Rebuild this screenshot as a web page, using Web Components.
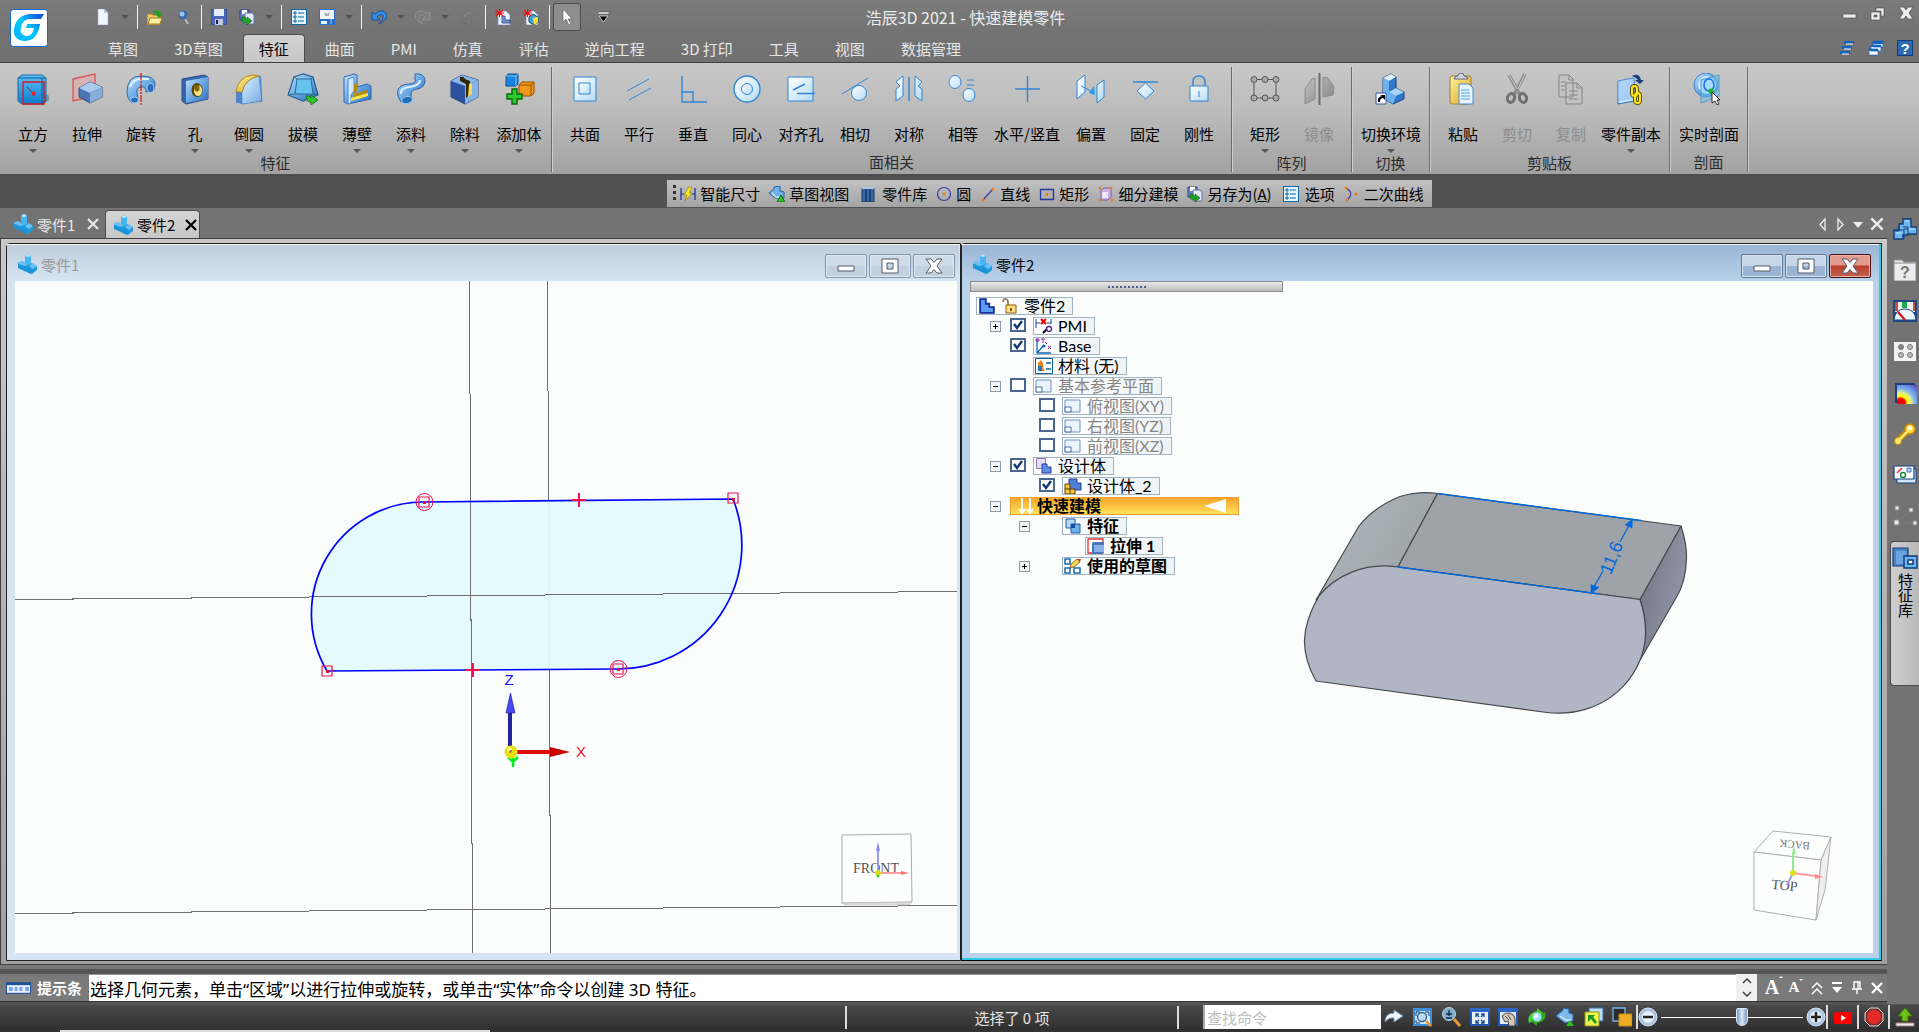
<!DOCTYPE html>
<html lang="zh-CN">
<head>
<meta charset="utf-8">
<title>浩辰3D 2021 - 快速建模零件</title>
<style>
html,body{margin:0;height:100%;background:#737373;overflow:hidden}
body{font-family:"Noto Sans CJK SC","Noto Sans",sans-serif;font-size:15px;color:#000}
</style>
</head>
<body>
<cad-app></cad-app>
<script>
const DEFS = `<defs>
<linearGradient id="b" x1="0" y1="0" x2="1" y2="1"><stop offset="0" stop-color="#c4e2fb"/><stop offset=".5" stop-color="#6aa8e4"/><stop offset="1" stop-color="#2f6dbd"/></linearGradient>
<linearGradient id="c" x1="0" y1="0" x2="0" y2="1"><stop offset="0" stop-color="#5cc0f5"/><stop offset="1" stop-color="#0a7ccf"/></linearGradient>
<linearGradient id="l" x1="0" y1="0" x2="1" y2="1"><stop offset="0" stop-color="#fff"/><stop offset="1" stop-color="#b5dcf5"/></linearGradient>
<linearGradient id="y" x1="0" y1="0" x2="1" y2="1"><stop offset="0" stop-color="#fff3a0"/><stop offset="1" stop-color="#d8a520"/></linearGradient>
<linearGradient id="g" x1="0" y1="0" x2="1" y2="1"><stop offset="0" stop-color="#c4c4c4"/><stop offset="1" stop-color="#828282"/></linearGradient>
<linearGradient id="n" x1="0" y1="0" x2="1" y2="1"><stop offset="0" stop-color="#5a92e0"/><stop offset="1" stop-color="#20418e"/></linearGradient>
<radialGradient id="h"><stop offset="0" stop-color="#e00"/><stop offset=".18" stop-color="#e00"/><stop offset=".28" stop-color="#ff0"/><stop offset=".42" stop-color="#e6f088"/><stop offset=".58" stop-color="#7eb6f0"/><stop offset=".75" stop-color="#6a8ae0"/><stop offset="1" stop-color="#5a35a0"/></radialGradient>
</defs>`;
const L = 'fill="none" stroke="#3186d6"', F = 'fill="url(#l)" stroke="#3186d6"';
const GA = '<path d="M0 5q4-1 5 2V4l7 5-7 5v-3Q1 12 0 5z" fill="#2fc52a" stroke="#0b6b12" stroke-width=".8"/>';
const ICONS = {
 // ribbon, 32 x 32
 box:['32 32','<ellipse cx="27" cy="25" rx="6" ry="4" fill="#4d718a" opacity=".6"/><path d="M1 5l4-3h20l4 3v23l-2 3H5l-4-3z" fill="url(#c)" stroke="#176ba8"/><path d="M1 5h24v26M25 5l4 0" fill="none" stroke="#0d5c9c"/><path d="M6 9h21v22H6z" fill="none" stroke="#d31920" stroke-width="1.3"/><path d="M10 14l6 6" stroke="#7b2030"/><circle cx="16.5" cy="20.500" r="2" fill="#f01818"/>'],
 extrude:['32 32','<path d="M2 6l22-5v22L2 28z" fill="#e8a4a4" fill-opacity=".55" stroke="#d95555" stroke-width="1.3"/><path d="M8 15l11-6 12 5v10l-12 6-11-6z" fill="#4a74b4" stroke="#35548a"/><path d="M8 15l11-6 12 5-12 6z" fill="#a9cbee"/><path d="M19 20v10l12-6V14z" fill="#86addb"/>'],
 revolve:['32 32','<path d="M2 19Q2 3 16 3q14 0 14 8l-1 6-8 2q0-6-5-5-5 1-4 6l1 7-6 3Q2 26 2 19z" fill="url(#b)" stroke="#2e67a6"/><ellipse cx="25.500" cy="15" rx="3.500" ry="4.500" fill="#2a6cb8" stroke="#a7d0f5"/><ellipse cx="9.500" cy="27" rx="4" ry="3" fill="#2a6cb8" stroke="#a7d0f5"/><path d="M5 14Q8 6 16 6h8" stroke="#e3f3ff" stroke-width="2" fill="none"/><path d="M16 0v32" stroke="#e01010" stroke-width="1.2" stroke-dasharray="7 1 2 1"/>'],
 hole:['32 32','<path d="M3 6l22-4 4 2v22L7 31l-4-3z" fill="#3567b0" stroke="#264d8c"/><path d="M7 8l22-4v22L7 30z" fill="url(#b)"/><ellipse cx="18" cy="17" rx="5.500" ry="7" fill="#5c4408"/><ellipse cx="19" cy="17.500" rx="4" ry="5.500" fill="#f4e47c"/><ellipse cx="18" cy="15" rx="2.500" ry="3.500" fill="#806010"/>'],
 round:['32 32','<path d="M3 30V19Q5 4 19 2l9 1 1 25z" fill="#497cc2"/><path d="M9 30V19Q12 6 26 3l3 25-20 3z" fill="url(#l)" stroke="#4a85c6"/><path d="M9 30V19Q12 6 26 3l2 1 1 24z" fill="url(#b)" opacity=".45"/><path d="M3 19Q5 4 19 2l7 1Q12 6 9 19z" fill="url(#y)" stroke="#b88a15"/><path d="M3 20l6-1v12l-6-2z" fill="#5083c8"/>'],
 draft:['32 32','<path d="M7 4l9-3 10 3 5 18-15 6L1 22z" fill="url(#b)" stroke="#235e92" stroke-width="1.2"/><path d="M10 6h14l2 15H8z" fill="#65c3ef" stroke="#2c6b95"/><path d="M7 4l3 2M26 4l-2 2M1 22l7-1M31 22l-5-1" stroke="#2c6b95"/><g transform="translate(19 18)">'+GA+'</g>'],
 thin:['32 32','<path d="M3 4l10-3 3 1v12l10-3 4 2v13L7 31l-4-2z" fill="url(#b)" stroke="#2f66ad"/><path d="M7 6l6-2v14l-3 4v8l-3 1z" fill="#d3e9fb" stroke="#4a86c8"/><path d="M16 10v8l-3 3V12zM13 21l13-4v3L12 25z" fill="#b98a00"/><path d="M10 25l17-5v3l-17 5z" fill="#ffe63c"/>'],
 add:['32 32','<path d="M20 1q9-1 10 6 0 8-8 9-6 1-6 5l1 6q-5 4-11 2Q-1 18 6 13q3-2 9-2 7-1 5-5z" fill="url(#b)" stroke="#2a66a8"/><ellipse cx="12" cy="27" rx="5.500" ry="3.500" fill="#226bb5" stroke="#9bd0f8" transform="rotate(-15 12 27)"/><path d="M6 21q-1-6 8-7 11-1 11-7" stroke="#def" stroke-width="2" fill="none"/>'],
 cut:['32 32','<path d="M2 8l11-6 16 5v17L16 31 2 24z" fill="#2c52a0" stroke="#28447a"/><path d="M2 8l11-6 16 5-13 6z" fill="#8ab9ee"/><path d="M16 13l13-6v17l-13 7z" fill="#85b3e4"/><path d="M11 4q4-1 5 2l5 2-1 14-3 3V11l-6-3z" fill="#332500"/><path d="M20 11l3-1v11l-4 3z" fill="#f6d958"/>'],
 bodies:['32 32','<path d="M3 3l2-2h10v10l-2 2H3z" fill="#1983dd" stroke="#0c4c8c"/><path d="M3 3h10v10M13 3l2-2" fill="none" stroke="#7cc4f8"/><path d="M16 12l3-3h12v11l-3 3H16z" fill="#f29a15" stroke="#994d00"/><path d="M16 12h12v11M28 12l3-3" fill="none" stroke="#994d00"/><path d="M9 16h5v5h5v5h-5v5H9v-5H4v-5h5z" fill="#2bc92b" stroke="#07690b" stroke-width="1.4"/>'],
 coplanar:['32 32',`<path ${F} d="M5 4h22v24H5z"/><path ${F} d="M10 10h11v11H10z"/>`],
 parallel:['32 32',`<path ${L} d="M4 18L26 6M6 27l22-12"/>`],
 perp:['32 32',`<path ${L} stroke-width="1.4" d="M5 3v26h25M5 19h11v10"/>`],
 concentric:['32 32',`<circle ${F} stroke-width="1.400" cx="16" cy="16" r="13"/><circle ${F} cx="16" cy="16" r="5.500"/>`],
 align:['32 32',`<path ${F} d="M3 4h25v24H3z"/><path ${L} stroke-width="1.4" d="M8 17l12-6M12 20.500h18"/>`],
 tangent:['32 32',`<circle ${F} cx="20" cy="20" r="7.500"/><path ${L} d="M3 21L29 5"/>`],
 symmetric:['32 32',`<path ${L} stroke-width="1.400" d="M16 4v24"/><path ${F} d="M3 28V16l4-3-4-4 7-6v20zM29 28V16l-4-3 4-4-7-6v20z"/>`],
 equal:['32 32',`<ellipse ${F} cx="8" cy="9" rx="6" ry="6.500"/><ellipse ${F} cx="22" cy="22" rx="6" ry="6.500"/><path ${L} d="M20 7h7M20 12h7"/>`],
 hv:['32 32',`<path ${L} stroke-width="1.400" d="M4 16h25M16.500 3v26"/>`],
 offset:['32 32',`<path ${F} d="M2 8l8-6v17l-8 7zM22 12l7-5v17l-7 6z"/><path ${L} d="M6 13l12 6"/><path d="M14 20l5-7 1 9z" fill="#18a0ee"/>`],
 fix:['32 32',`<path ${L} stroke-width="1.500" d="M4 9h25"/><path ${F} d="M16.500 10l8.500 8-8.500 8L8 18z"/>`],
 rigid:['32 32',`<path ${L} stroke-width="1.500" d="M10 13V9q0-6 6-6t6 6v4"/><path ${F} d="M7 13h18v15H7z"/><path ${L} d="M16 18v6"/>`],
 pattern:['32 32','<g fill="#aaa" stroke="#555"><path d="M5 6.500h22M5 25h22M5 7v18M27 7v18" fill="none"/><circle cx="5" cy="6.500" r="3"/><circle cx="16" cy="6.500" r="3"/><circle cx="27" cy="6.500" r="3"/><circle cx="5" cy="25" r="3"/><circle cx="16" cy="25" r="3"/><circle cx="27" cy="25" r="3"/></g>'],
 mirror:['32 32','<path d="M2 16L9 6l3-1v21L2 31zM20 4l5 1 6 9-1 8-10 2z" fill="url(#g)" stroke="#8b8b8b"/><path d="M16.500 0v32" stroke="#6b6b6b" stroke-width="2"/>'],
 env:['32 32','<path d="M8 5l8-4 5 3v11l8 4v7l-11 5-10-6z" fill="#2f77c8" stroke="#173f80"/><path d="M8 5l8-4 5 3-7 4z" fill="#e1f3ff"/><path d="M8 5l6 3v11l7 4-3 8-10-6z" fill="#6db2ec"/><path d="M14 19l7-4 8 4-8 4z" fill="#a8d4f6"/><path d="M1 20h10v11H1z" fill="#fff" stroke="#3555a5"/><path d="M3 29q-1-5 4-6l-2-1h5v5l-2-2q-3 0-3 4z" fill="#000"/>'],
 paste:['32 32','<rect x="3" y="3" width="21" height="28" rx="2" fill="url(#y)" stroke="#a07c30"/><path d="M7 6q0-3 4-3 0-3 3-3t3 3q4 0 4 3z" fill="#ccd6e2" stroke="#667"/><path d="M12 11h10l4 4v16H12z" fill="#e7f4ff" stroke="#4b8cc8"/><path d="M14 17h8M14 20h9M14 23h9M14 26h9" stroke="#4ba0e0"/>'],
 scissors:['32 32','<path d="M8 2l11 20M24 1L13 22" stroke="#8d8d8d" stroke-width="3.500"/><path d="M8 2l8 14M24 1l-7 15" stroke="#ccc"/><g fill="none" stroke="#707070" stroke-width="3"><ellipse cx="10" cy="25" rx="3.500" ry="4.500" transform="rotate(20 10 25)"/><ellipse cx="22" cy="25" rx="3.500" ry="4.500" transform="rotate(-20 22 25)"/></g>'],
 copy:['32 32','<g fill="#c4c4c4" stroke="#858585"><path d="M4 2h10l4 4v18H4zM11 10h11l5 5v16H11z"/><path d="M14 2v5h4M22 10v5h5M6 9h5M6 13h4M6 17h4M14 18h9M14 22h9M14 26h9" fill="none"/></g>'],
 partcopy:['32 32','<path d="M3 8l16-3v23L3 31z" fill="url(#l)" stroke="#2e6ac0"/><path d="M3 8l16-3v20L3 29z" fill="#8cc0f3" opacity=".65"/><path d="M17 3q7-4 9 4h3l-4 4-5-4h3q-2-3-6-4z" fill="#153e7b"/><g fill="none"><rect x="17" y="13" width="5" height="10" rx="2.500" stroke="#584c00" stroke-width="4"/><rect x="20" y="20" width="5" height="10" rx="2.500" stroke="#584c00" stroke-width="4"/><rect x="17" y="13" width="5" height="10" rx="2.500" stroke="#ffe719" stroke-width="2"/><rect x="20" y="20" width="5" height="10" rx="2.500" stroke="#ffe719" stroke-width="2"/></g>'],
 section:['32 32','<ellipse cx="13" cy="12" rx="12" ry="12" fill="url(#b)" stroke="#3f7ec0"/><ellipse cx="14" cy="12" rx="9" ry="9" fill="#cdeafc"/><path d="M8 7l18-5v21L8 30z" fill="#70c6ee" fill-opacity=".5" stroke="#4a99c8"/><ellipse cx="16" cy="12" rx="5" ry="6" fill="#a9d8ff" stroke="#1670ea" stroke-width="1.500"/><circle cx="18" cy="18" r="2.500" fill="#13bc13"/><path d="M19 19v11l3-2 2 4 2-1-2-4h3z" fill="#fff" stroke="#000" stroke-width=".8"/>'],
 // small, 16 x 16
 neu:['16 16','<path d="M3 0h6l4 4v12H3z" fill="#f0f6fd" stroke="#9db4d0" stroke-width=".6"/><path d="M9 0v4h4" fill="#bcd"/>'],
 open:['16 16','<path d="M0 5h5l1 1h7v10H0z" fill="#f0cc68" stroke="#a5791a"/><path d="M1 15l2-6h12l-2 6z" fill="#fff0a0" stroke="#a5791a"/><path d="M5 3q6-4 8 1h2l-3 5-4-4h2q-2-2-5-2z" fill="#18a51b"/>'],
 pin:['16 16','<path d="M9 8l4 7" stroke="#bbb" stroke-width="2"/><circle cx="8" cy="6" r="4.500" fill="#3a69aa"/><circle cx="7" cy="5" r="2.500" fill="#9dc0e8"/>'],
 save:['16 16','<path d="M0 0h15l1 1v15H0z" fill="#4c66bc" stroke="#2c4088"/><path d="M3 0h10v7H3z" fill="#e5ecf8"/><path d="M4 10h8v6H4z" fill="#c3cbe0"/><path d="M5 11h2v4H5z" fill="#223"/>'],
 saveas:['16 16','<path d="M1 1h9v10H1z" fill="#6b7fc8" stroke="#2c4088"/><path d="M3 1h5v4H3z" fill="#fff"/><path d="M6 4h7l2 2v9H6z" fill="#e2e8f6" stroke="#6374aa"/><path d="M3 8v3q0 3 5 3v2l5-4-5-4v2Q6 11 6 8z" fill="#1fa32b" stroke="#075c10" stroke-width=".6"/>'],
 list:['16 16','<rect width="15" height="15" x=".5" y=".5" fill="#e6f5fd" stroke="#0d67a3"/><path d="M3 3h2v2H3zM3 7h2v2H3zM3 11h2v2H3z" fill="none" stroke="#0d67a3"/><path d="M7 4h6M7 8h6M7 12h6" stroke="#0d67a3"/>'],
 view:['16 16','<path d="M0 0h16v16H0z" fill="#2b70c8"/><path d="M1 1h14v9H1z" fill="#f1f5f8"/><path d="M5 3l3 2 3-2-1 4H6z" fill="#aab"/><path d="M2 12h6v3H2z" fill="#dff"/><path d="M12 10v5" stroke="#9cf"/>'],
 undo:['16 16','<path d="M1 3v8h8L6 8q4-4 6-1 1 3-4 8 8-4 8-9Q12-2 4 5z" fill="#2f8fe4" stroke="#113f88" stroke-width=".8"/>'],
 redo:['16 16','<path d="M15 3v8H7l3-3Q6 4 4 7q-1 3 4 8Q0 11 0 6 4-2 12 5z" fill="#7c7c7c" stroke="#999" stroke-width=".8"/>'],
 repeat:['16 16','<path d="M4 4v5h5L7 7q4-3 6 0V3Q8 0 6 5zM11 16v-5H6l2 2q-4 2-5-1v-3q-3 7 6 5z" fill="#828282" stroke="#666" stroke-width=".5"/>'],
 newpart:['16 16','<path d="M3 2h8l4 4v10H3z" fill="#eef2fa" stroke="#7385b0" stroke-width=".6"/><path d="M7 14V7h3v4h5v3z" fill="#7496d2" stroke="#22448a" stroke-width=".8"/><path d="M1 1l7 6M8 1L1 7M4.500 0v8M0 4h9" stroke="#e81010" stroke-width="1.100"/>'],
 newasm:['16 16','<path d="M3 2h8l4 4v10H3z" fill="#eef2fa" stroke="#7385b0" stroke-width=".6"/><path d="M6 8l4-3 5 3v5l-4 3-5-3z" fill="#3f9fdc" stroke="#155"/><path d="M10 9l5-1v5l-4 3z" fill="#ffe13a"/><path d="M1 1l7 6M8 1L1 7M4.500 0v8M0 4h9" stroke="#e81010" stroke-width="1.100"/>'],
 arrow:['16 16','<path d="M4 0v13l3-3 3 6 2-1-3-5h4z" fill="#fff" stroke="#555" stroke-width=".6"/>'],
 more:['12 12','<path d="M0 1h11v2H0z" fill="#fff" stroke="#333" stroke-width=".5"/><path d="M1 5h9l-4.500 6z" stroke="#fff" stroke-width=".7"/>'],
 smart:['16 16','<path d="M1 2v12M15 2v12M1 8h3M12 8h3" stroke="#1b2a98" stroke-width="1.200"/><path d="M9 1L4 9h3l-2 6 7-8H9l3-6z" fill="#ffe81a" stroke="#8e7a00" stroke-width=".6"/>'],
 sketchview:['16 16','<path d="M0 7l5-4V1l6-1v5l4 1v6H6z" fill="#6db0e8" stroke="#235f9f"/><path d="M3 7l4 4h5" fill="none" stroke="#cfe8fa" stroke-width="1.500"/><path d="M12 9l4 7H8z" fill="#2fc42a" stroke="#0c6b12"/>'],
 lib:['16 16','<path d="M2 2h4v14H2zM6 2h4v14H6zM10 2h4v14h-4z" fill="#3d6aa8" stroke="#17365f"/><path d="M2 1h12v2H2z" fill="#a8c6e5"/>'],
 circle:['16 16','<circle cx="8" cy="8" r="6.500" fill="none" stroke="#3d3ba0" stroke-width="1.200"/><circle cx="8" cy="8" r="1.400" fill="#f27a12"/>'],
 line:['16 16','<path d="M3 14L13 3" stroke="#3d3ba0" stroke-width="1.200"/><circle cx="3" cy="14" r="1.500" fill="#f27a12"/><circle cx="13" cy="3" r="1.500" fill="#f27a12"/>'],
 rect:['16 16','<path d="M1.500 3.500h13v10h-13z" fill="none" stroke="#26389c" stroke-width="1.300"/><circle cx="8" cy="8.500" r="1.400" fill="#f27a12"/>'],
 subd:['16 16','<path d="M3 4l3-2h7v9l-3 3H3z" fill="#c8b0df" stroke="#8064a5"/><path d="M4 6h6v6H4z" fill="#f0e6fa"/><g fill="#f27a12"><circle cx="2" cy="2" r="1.200"/><circle cx="13" cy="2" r="1.200"/><circle cx="2" cy="14" r="1.200"/><circle cx="14" cy="14" r="1.200"/></g>'],
 conic:['16 16','<path d="M2 2q9 5 1 12" fill="none" stroke="#3d3ba0" stroke-width="1.200"/><circle cx="2" cy="2" r="1.500" fill="#f27a12"/><circle cx="3" cy="14" r="1.500" fill="#f27a12"/><circle cx="12" cy="8" r="1.500" fill="#f27a12"/>'],
 part:['20 20','<path d="M8 2l3-2 3 2v7l6 3v4l-5 4L1 13V9l4-2 3 2z" fill="#1e9bdf"/><path d="M8 2l3-2 3 2v8l-3 1-3-2z" fill="#47b4f4"/><path d="M8 2l3-2 3 2-3 1z" fill="#c0e5fb"/><path d="M0 9l5-2 3 2 3 2-4 1zM12 12l4-3 4 3-4 3z" fill="#6cc1f4"/><path d="M1 11v3l13 6v-4z" fill="#1a93d8"/>'],
 // tree
 tpart:['14 14','<path d="M1 1h5v4h3v3h4v5H1z" fill="#5c9cf0" stroke="#15329c" stroke-width="1.600"/>'],
 lock:['16 16','<path d="M6 8V4q0-3-3-3-2 0-2 3" fill="none" stroke="#8a7248" stroke-width="1.600"/><path d="M4 7h10v8H4z" fill="#ffdd84" stroke="#8c5d10"/><path d="M9 10v3" stroke="#523000" stroke-width="1.500"/>'],
 tpmi:['18 16','<path d="M1 1v9M1 5h4M16 1v5M12 5h4" stroke="#1548a0"/><path d="M6 1l5 5M11 1L6 6" stroke="#e00" stroke-width="2.200"/><path d="M8 15l4-4" stroke="#000" stroke-width="2"/><circle cx="14" cy="11" r="2.500" fill="none" stroke="#4a238e" stroke-width="1.300"/>'],
 tbase:['18 16','<path d="M2 1v14h14M2 15L9 7" fill="none" stroke="#1268ae" stroke-width="1.300"/><path d="M1 1h3v2H1zM6 1h4M8 1v4M10 4l2 2M13 8l3 3M16 8l-3 3" stroke="#89229a" fill="none"/><circle cx="9" cy="8" r="1.500" fill="#1268ae"/>'],
 tmat:['18 16','<path d="M.5.500h17v15H.5z" fill="#fff" stroke="#0c619b"/><path d="M3 5l3-3 2 3v5l2 3H4l-1-4z" fill="#e38324"/><path d="M3 8h4v5H3z" fill="#2778bd"/><path d="M11 5h5M11 11h5" stroke="#0c619b" stroke-width="1.300"/>'],
 tplane:['18 16','<path d="M1 2h15v12H1z" fill="#edf3fb" stroke="#6d91c8"/><path d="M1 9h6v5H1z" fill="#fff" stroke="#486eb0"/>'],
 tbody:['16 16','<path d="M.5.500h9v10h-9z" fill="#e4dcf0" stroke="#9279b5"/><path d="M6 6h5v3h4v6H6z" fill="#5e8ee0" stroke="#233b9b"/>'],
 tbody2:['18 16','<path d="M5 1h8v4h4v7H5z" fill="#4f82d4" stroke="#1d3d93"/><path d="M1 6h5v5h5v5H1z" fill="#f9c543" stroke="#5a3a00"/><path d="M1 11h5v5" fill="none" stroke="#5a3a00"/>'],
 tfeat:['16 16','<path d="M1 1h9v9H1z" fill="#b7d9f4" stroke="#1b5aa5"/><path d="M6 6h9v9H6z" fill="#6fb0ea" stroke="#1b5aa5"/><path d="M6 6h4v4H6z" fill="#164e9c"/>'],
 textr:['18 16','<path d="M1 1h15v14H1z" fill="#fff" stroke="#e23333" stroke-width="1.300"/><path d="M5 5l2-1h10v10l-2 2H5z" fill="#4a76b5"/><path d="M7 7h10v7H7z" fill="#88b2e6"/>'],
 tsketch:['18 16','<path d="M1 1h5v5H1zM1 10h5v5H1zM10 10h6v5h-6z" fill="#fff" stroke="#156bb8" stroke-width="1.500"/><path d="M6 10l1-4 6-5 3 3-6 5z" fill="#f6d257" stroke="#6a5010" stroke-width=".8"/><path d="M13 1l3 3 1-3z" fill="#e33"/>'],
 tquick:['16 16','<path d="M4 0v14M1 11l3 4 3-4M12 0v14M9 11l3 4 3-4" fill="none" stroke="#fff" stroke-width="2"/>'],
 tflag:['22 14','<path d="M0 7L22 0v14z" fill="#fff"/>'],
 // side bar
 s1:['24 22','<path d="M10 1h8v8h6v7h-9v1h-5v4H1v-9h5V6h4z" fill="#6cb6ee" stroke="#123c78" stroke-width="1.400"/><path d="M1 13h5v-1M6 12h5v9M6 12V8M11 11h4v5M15 11V9M10 9h5" fill="none" stroke="#123c78"/><path d="M12 3h4M3 15h5M16 11h6" stroke="#c7e8ff"/>'],
 s2:['24 22','<path d="M1 1h8l2 2h12v19H1z" fill="#ececec" stroke="#8a8a8a"/><path d="M1 4h22" stroke="#888"/><text x="12" y="19" text-anchor="middle" font-family="Liberation Sans" font-weight="bold" font-size="16" fill="#777">?</text>'],
 s3:['24 22','<path d="M0 0h24v22H0z" fill="#1d4686"/><path d="M2 2h20v10H2z" fill="#eee"/><path d="M2 2h3v9H2zM20 2h2v9h-2z" fill="#c84b32"/><path d="M9 2h5v6H9z" fill="#23a847"/><path d="M1 20q1-11 11-11t11 11z" fill="#eaf7ff" stroke="#1d4686"/><path d="M5 12l7 8" stroke="#d1202c" stroke-width="2.500"/>'],
 s4:['24 22','<path d="M1 1h22v19H1z" fill="#f2f2f2"/><g stroke="#777" fill="#bbb"><circle cx="8" cy="6" r="2.500" fill="#888"/><circle cx="17" cy="6" r="2.500"/><circle cx="8" cy="14" r="2.500"/><circle cx="17" cy="14" r="2.500"/></g>'],
 s5:['24 22','<path d="M2 1h20v20H2z" fill="#1d3d82"/><svg x="4" y="3" width="17" height="17" viewBox="0 0 17 17"><path d="M0 0h17v17H0z" fill="#5a35a0"/><circle cx="2" cy="14" r="19" fill="url(#h)"/></svg>'],
 s6:['24 22','<path d="M4 18L17 6" stroke="#c78a00" stroke-width="6"/><circle cx="17" cy="6" r="5" fill="#ffd83b" stroke="#c78a00" stroke-width="1.500"/><circle cx="5" cy="18" r="3.500" fill="#ffe873" stroke="#c78a00"/><path d="M5 18L15 8" stroke="#ffe873" stroke-width="2.500"/><circle cx="17" cy="5" r="2.500" fill="#fff8d0"/>'],
 s7:['24 22','<path d="M4 5h19v14H4z" fill="#cfe6f8" stroke="#143e80"/><path d="M1 2h20v13H1z" fill="#fff" stroke="#143e80" stroke-width="1.200"/><path d="M4 9l5-5" stroke="#e22" stroke-width="1.500"/><circle cx="10" cy="11" r="2.500" fill="none" stroke="#1a8b33" stroke-width="1.500"/><path d="M14 4h4v4h-4z" fill="#aad2fa" stroke="#3776bf"/>'],
 s8:['24 22','<g fill="#e8e8e8" stroke="#888"><path d="M2 1h4v4H2zM16 3h4v4h-4zM1 15h5v5H1zM20 16h4v4h-4z"/><path d="M4 14V7M6 15l9-7M7 18h11" stroke-dasharray="1 1" fill="none"/></g>'],
 s9:['26 22','<path d="M1 1h15v18H1z" fill="#4a84c6" stroke="#173d76" stroke-width="1.200"/><path d="M4 4h10v13H4z" fill="#6fa5de"/><path d="M12 9h13v12H12z" fill="#6bb6f2" stroke="#113a76" stroke-width="1.400"/><path d="M16 13h5v4h-5z" fill="#fff" stroke="#113a76" stroke-width="1.500"/>'],
 // status bar
 go:['20 20','<path d="M1 15q0-9 9-9V3l9 6-9 6v-4q-5-1-9 4z" fill="#eef6fd" stroke="#6b90b5"/>'],
 zarea:['20 20','<path d="M0 1h19v18H0z" fill="#3f8edb"/><path d="M2 4h15v13H2z" fill="#cfe6fb"/><path d="M3 9V5h4M12 5h4v4M7 16H3v-3" fill="none" stroke="#135"/><circle cx="9" cy="10" r="4.500" fill="#b8dcf6" stroke="#33618c" stroke-width="1.300"/><path d="M13 14l5 5" stroke="#e69a35" stroke-width="2.500"/>'],
 zoom:['20 20','<circle cx="8" cy="7" r="6.500" fill="#82aecb" stroke="#b9d0e0"/><path d="M5 7h6M8 3v6M5 11h6" stroke="#124" stroke-width="1.300"/><path d="M13 12l6 7" stroke="#e69a35" stroke-width="3"/>'],
 fit:['20 20','<path d="M1 2h18v16H1z" fill="#e6f2ff" stroke="#2457b0" stroke-width="2"/><path d="M0 1h20v4H0z" fill="#2c65c8"/><path d="M6 7l3 3M14 7l-3 3M6 16l3-3M14 16l-3-3M6 10V7h3M11 7h3v3M6 13v3h3M14 13v3h-3" fill="none" stroke="#1f4a9c" stroke-width="1.300"/>'],
 pan:['20 20','<path d="M1 2h18v16H1z" fill="#dfecfa" stroke="#2457b0" stroke-width="2"/><path d="M0 1h20v4H0z" fill="#2c65c8"/><path d="M4 9q3-4 8-3 5 2 5 6v7h-6l-1-5-3 1z" fill="#d8c6b6" stroke="#444"/><path d="M7 9l4 4M10 8l3 5" stroke="#555"/>'],
 rot:['20 20','<path d="M2 16q-3-9 8-12V1l6 5-6 5V8Q5 9 7 14z" fill="#42d42c"/><path d="M18 5q3 9-8 11v3l-6-5 5-5v4q6 0 5-6z" fill="#2cab20"/><circle cx="10" cy="10" r="4.500" fill="#a8dcfa"/><circle cx="9" cy="9" r="2" fill="#fff"/>'],
 vo:['20 20','<path d="M1 9l7-6V1l6 1v4l4 1v7l-8 2z" fill="#7fb9ea" stroke="#285fa0"/><path d="M5 9l6 4h5" fill="none" stroke="#d6ecfb" stroke-width="1.500"/><path d="M15 13l4 6h-8z" fill="#29c11f"/>'],
 st:['20 20','<path d="M5 1h14v13H5z" fill="#bcdcf8" stroke="#2c6bb0"/><path d="M1 5h14v14H1z" fill="#f2f04a" stroke="#8b9a16"/><path d="M4 15V8h7L9 10l4 5-2 2-4-5z" fill="#17991e"/>'],
 sw:['20 20','<path d="M1 1h12v13H1z" fill="#2a2a2a" stroke="#7bb4ea" stroke-width="1.300"/><path d="M7 7h13v12H7z" fill="#edab26" stroke="#c08c15"/>'],
 minus:['20 20','<circle cx="10" cy="10" r="9" fill="#a9c3e0" stroke="#d9e7f4"/><circle cx="10" cy="10" r="6" fill="#e5eff8"/><path d="M5 10h10" stroke="#222" stroke-width="2.500"/>'],
 plus:['20 20','<circle cx="10" cy="10" r="9" fill="#a9c3e0" stroke="#d9e7f4"/><circle cx="10" cy="10" r="6" fill="#e5eff8"/><path d="M5 10h10M10 5v10" stroke="#222" stroke-width="2.500"/>'],
 tube:['20 20','<rect x="1" y="5" width="18" height="12" rx="2.500" fill="#f00"/><path d="M8 8l5 3-5 3z" fill="#fff"/>'],
 rec:['20 20','<path d="M6 1h8l5 5v8l-5 5H6l-5-5V6z" fill="#7b3030" stroke="#ddd"/><circle cx="10" cy="10" r="7" fill="#e52a2a"/>'],
 up:['20 20','<path d="M10 1l7 8h-4v5H7V9H3z" fill="#6cbf18" stroke="#3c8005"/><path d="M1 16h18v3H1z" fill="#eee" stroke="#a87c7c"/>'],
 pbar:['26 12','<path d="M0 0h26v12H0z" fill="#1f4f96"/><path d="M1 3h24v8H1z" fill="#e5eefa"/><path d="M3 5h4v4H3zM9 5h3v4H9zM14 5h3v4h-3zM20 5h4v4h-4z" fill="#7ba6de"/>'],
 // window glyphs
 wmin:['16 16','<path d="M1 8h13v4H1z" fill="#eee" stroke="#555" stroke-width=".8"/>'],
 wres:['16 16','<path d="M6 2h8v8h-3V5H6z" fill="#eee" stroke="#555" stroke-width=".7"/><path d="M1 6h9v8H1zM4 9v2h3V9z" fill="#eee" fill-rule="evenodd" stroke="#555" stroke-width=".7"/>'],
 wx:['16 16','<path d="M1 1h5l2 3 2-3h5l-4 6 4 6h-5l-2-3-2 3H1l4-6z" fill="#eee" stroke="#555" stroke-width=".8"/>'],
 casc1:['16 16','<path d="M5 1h10v3H5zM3 6h10v3H3zM1 11h10v3H1z" fill="#1362bd"/><path d="M7 4h7M5 9h7M3 14h7" stroke="#fff"/>'],
 casc2:['16 16','<path d="M5 1h10v6H5zM3 5h10v6H3zM1 9h9v6H1z" fill="#fff" stroke="#1362bd" stroke-width=".7"/><path d="M5 1h10v3H5zM3 5h10v2H3zM1 9h9v2H1z" fill="#1362bd"/>'],
 help:['16 16','<path d="M.5.500h15v15H.5z" fill="#2d69b2" stroke="#123a77"/><text x="8" y="14" text-anchor="middle" font-family="Liberation Sans" font-weight="bold" font-size="15" fill="#fff">?</text>'],
 mmin:['20 16','<path d="M2 8h16v5H2z" fill="#fff" stroke="#555b66"/>'],
 mmax:['20 16','<path d="M2 1h16v14H2zM7 5v6h6V5z" fill="#fff" fill-rule="evenodd" stroke="#555b66"/>'],
 mx:['20 16','<path d="M2 1h5l3 3.500L13 1h5l-5 7 5 7h-5l-3-3.500L7 15H2l5-7z" fill="#fff" stroke="#555b66"/>'],
 tl:['14 14','<path d="M10 2v11L5 7.500z" fill="none" stroke="#eee" stroke-width="1.300"/>'],
 tr:['14 14','<path d="M5 2v11l5-5.500z" fill="none" stroke="#eee" stroke-width="1.300"/>'],
 td:['14 14','<path d="M2 5h10L7 11z" fill="#eee"/>'],
 x:['14 14','<path d="M2 2l10 10M12 2L2 12" stroke="currentColor" stroke-width="2.200"/>'],
 chev2:['14 14','<path d="M2 7l5-5 5 5M2 13l5-5 5 5" fill="none" stroke="#fff" stroke-width="1.500"/>'],
 drop:['14 14','<path d="M2 1h10v2H2zM2 6h10l-5 6z" fill="#fff"/>'],
 ppin:['14 14','<path d="M4 1h6v7H4zM2 8h10M7 8v5M8 1v7" fill="none" stroke="#fff" stroke-width="1.400"/>'],
 up1:['10 8','<path d="M1 6l4-4 4 4" fill="none" stroke="#333" stroke-width="1.300"/>'],
 dn1:['10 8','<path d="M1 2l4 4 4-4" fill="none" stroke="#333" stroke-width="1.300"/>'],
 logo:['38 38','<rect x=".5" y=".5" width="37" height="37" rx="3" fill="#fff" stroke="#1467cf"/><linearGradient id="q" x1="0" y1="1" x2="1" y2="0"><stop offset="0" stop-color="#00b4ff"/><stop offset=".5" stop-color="#00c8fa"/><stop offset="1" stop-color="#1a3bd8"/></linearGradient><path d="M34 5H19Q6 7 4 20q-1 11 10 12 11 1 15-12l1-5H17l-1 4h8q-2 9-8 8-7-1-5-9 2-8 9-8h11z" fill="url(#q)"/>']
};
const base = `<style>*{box-sizing:border-box}button,input{font:inherit;color:inherit;margin:0}button{border:0;background:none;padding:0;display:flex;align-items:center;justify-content:center;white-space:nowrap}</style>`;
function define(name, render) {
  customElements.define(name, class extends HTMLElement {
    connectedCallback() {
      if (this.shadowRoot) return;
      this.attachShadow({mode: 'open'}).innerHTML = base + render(this);
    }
  });
}
const ic = (n, w, h) => `<cad-icon name="${n}" style="width:${w}px;height:${h || w}px"></cad-icon>`;

define('cad-icon', e => {
  const [box, body] = ICONS[e.getAttribute('name')];
  return `<style>:host{display:block;flex:none}svg{display:block;width:100%;height:100%}</style><svg viewBox="0 0 ${box}" aria-hidden="true">${DEFS}${body}</svg>`;
});

define('quick-access', () => {
  const items = 'neu ^ | open pin | save saveas ^ | list view ^ | undo ^ redo ^ repeat | newpart newasm |'.split(' ');
  return `<style>:host{display:flex;align-items:center;height:34px}button{width:28px;height:28px}.d{width:16px}.d i{border:4px solid transparent;border-top-color:#505050;border-bottom:0}
  .s{width:8px;height:24px;display:flex;justify-content:center}.s::after{content:"";width:1px;background:#f4f4f4}.on{background:#8e8e8e;border:1px solid #4a4a4a;border-radius:3px}.m{margin-left:9px}</style>` +
  items.map(i => i === '^' ? '<button class="d" aria-label="更多"><i></i></button>' : i === '|' ? '<span class="s"></span>' : `<button aria-label="${i}">${ic(i, 16)}</button>`).join('') +
  `<button class="on" aria-label="选择">${ic('arrow', 16)}</button><button class="m" aria-label="自定义">${ic('more', 12)}</button>`;
});

define('ribbon-tabs', () => `<style>:host{display:flex;gap:4px;align-items:stretch;padding-left:92px;height:28px;color:#e6e6e6}
  button{padding:0 16px}.on{background:linear-gradient(#d2d2d2,#c8c8c8);color:#000;border:1px solid #4c4c4c;border-bottom:0;border-radius:4px 4px 0 0;padding:0 15px}
  .r{margin-left:auto;display:flex;gap:13px;align-items:center;padding-right:6px}.r button{padding:0}</style>` +
  '草图 3D草图 特征 曲面 PMI 仿真 评估 逆向工程 3D&nbsp;打印 工具 视图 数据管理'.split(' ').map(t => `<button class="${t === '特征' ? 'on' : ''}">${t}</button>`).join('') +
  `<div class="r">${['casc1','casc2','help'].map(n => `<button aria-label="${n}">${ic(n, 16)}</button>`).join('')}</div>`);

define('app-header', () => `<style>:host{display:grid;grid-template-columns:1fr auto 1fr;grid-template-rows:34px 28px;background:linear-gradient(#7b7b7b,#737373 34px,#717171)}
  .logo{grid-area:1/1/3/2;padding:9px 10px;width:58px}quick-access{grid-area:1/1;margin-left:89px}
  h1{grid-area:1/2;margin:0;padding-left:12px;font-size:16px;font-weight:400;line-height:34px;color:#ececec}
  .w{grid-area:1/3;display:flex;justify-content:flex-end;align-items:center;gap:12px;padding:0 5px 6px 0}ribbon-tabs{grid-area:2/1/3/4}</style>
  <div class="logo">${ic('logo', 38)}</div><quick-access></quick-access><h1>浩辰3D 2021 - 快速建模零件</h1>
  <div class="w"><button aria-label="最小化">${ic('wmin',16)}</button><button aria-label="还原">${ic('wres',16)}</button><button aria-label="关闭">${ic('wx',16)}</button></div><ribbon-tabs></ribbon-tabs>`);

define('ribbon-button', e => `<style>:host{display:block;width:54px}:host([wide]){width:66px}:host([xwide]){width:74px}
  button{width:100%;flex-direction:column;justify-content:flex-start}span{margin-top:19px;line-height:20px}:host([off]) span{color:#8c8c8c}
  i{margin-top:5px;border:4px solid transparent;border-top-color:#555;border-bottom:0}</style>
  <button ${e.hasAttribute('off') ? 'disabled' : ''}>${ic(e.getAttribute('icon'), 32)}<span><slot></slot></span>${e.hasAttribute('menu') ? '<i></i>' : ''}</button>`);

define('ribbon-group', e => `<style>:host{display:flex;flex-direction:column;padding:6px 5px 0;border-right:1px solid #6c6c6c;box-shadow:1px 0 #cfcfcf}
  .b{display:flex;height:86px;padding-left:1px}.t{line-height:20px;text-align:center;color:#2c2c2c}</style>
  <div class="b"><slot></slot></div><div class="t">${e.getAttribute('label')}</div>`);

define('app-ribbon', () => {
  const groups = [
    ['特征', 'box立方^ extrude拉伸 revolve旋转 hole孔^ round倒圆^ draft拔模 thin薄壁^ add添料^ cut除料^ bodies添加体^'],
    ['面相关', 'coplanar共面 parallel平行 perp垂直 concentric同心 align对齐孔 tangent相切 symmetric对称 equal相等 hv水平/竖直~ offset偏置 fix固定 rigid刚性'],
    ['阵列', 'pattern矩形^ mirror镜像-'], ['切换', 'env切换环境^+'],
    ['剪贴板', 'paste粘贴 scissors剪切- copy复制- partcopy零件副本^+'], ['剖面', 'section实时剖面+']];
  return `<style>:host{display:flex;height:114px;padding:4px 0 2px;border-top:1px solid #3f3f3f;border-bottom:2px solid #4d4d4d;background:linear-gradient(#c8c8c8,#bdbdbd 40%,#a2a2a2)}</style>` +
    groups.map(([t, s]) => `<ribbon-group label="${t}">` + s.split(' ').map(x => {
      const m = x.match(/^([a-z]+)([^\^+~-]+)(.*)$/), f = m[3];
      return `<ribbon-button icon="${m[1]}" ${f.includes('^') ? 'menu' : ''} ${f.includes('+') ? 'wide' : ''} ${f.includes('-') ? 'off' : ''} ${f.includes('~') ? 'xwide' : ''}>${m[2]}</ribbon-button>`;
    }).join('') + '</ribbon-group>').join('');
});

define('command-strip', () => `<style>:host{display:flex;justify-content:center;height:32px;padding:4px 0 1px;background:#525252}
  .bar{display:flex;align-items:center;gap:8px;margin-left:180px;background:linear-gradient(#c2c2c2,#a4a4a4);padding:0 8px 0 6px}
  .g{width:3px;height:17px;margin-right:-5px;background:repeating-linear-gradient(#333 0 3px,transparent 3px 6px)}button{gap:3px;line-height:24px}cad-icon{margin:0 1px}cad-icon[name=lib],cad-icon[name=list]{margin:0 3px}</style>
  <div class="bar"><span class="g"></span>` + [['smart','智能尺寸'],['sketchview','草图视图'],['lib','零件库'],['circle','圆'],['line','直线'],['rect','矩形'],['subd','细分建模'],['saveas','另存为(<u>A</u>)'],['list','选项'],['conic','二次曲线']]
  .map(([i, t]) => `<button>${ic(i, 16)}<span>${t}</span></button>`).join('') + '</div>');

define('doc-tabs', () => `<style>:host{display:flex;height:30px;padding:2px 0 0 10px;color:#e8e8e8}
  .t{display:flex;align-items:center;padding:0 5px 0 3px;width:95px}.t span{flex:1;padding-left:4px}.t.on{color:#000;background:linear-gradient(#d4d4d4,#c8c8c8);border:1px solid #4c4c4c;border-bottom:0;border-radius:4px 4px 0 0;padding:0 1px 0 7px}
  .n{margin-left:auto;display:flex;align-items:center;gap:4px;padding-right:2px}</style>
  <div class="t">${ic('part',20)}<span>零件1</span><button aria-label="关闭">${ic('x',14)}</button></div>
  <div class="t on">${ic('part',20)}<span>零件2</span><button aria-label="关闭">${ic('x',14)}</button></div>
  <div class="n">${['tl','tr','td','x'].map(n => `<button aria-label="${n}">${ic(n, n === 'x' ? 16 : 14)}</button>`).join('')}</div>`);

define('doc-window', e => `<style>:host{display:flex;flex-direction:column;min-width:0;border:1px solid #222;border-radius:4px 0 0 0;background:#d7e4f2;padding:0 3px 7px 8px}
  :host([active]){background:#b9d1ea;padding:0 8px 7px;border-bottom-color:#000;box-shadow:inset -2px -2px #2fcbe6}
  header{display:flex;align-items:center;gap:4px;height:37px;margin:0 -2px 0 -8px;padding:2px 4px 0 10px;background:linear-gradient(#c0cedc,#d7e4f2);border-top:1px solid #f5f8fb;color:#999}
  :host([active]) header{background:linear-gradient(#9ab5d4,#b9d1ea);color:#000;margin:0 -6px 0 -8px;padding-right:8px}
  span{flex:1}.c{display:flex;gap:2px;padding-top:4px}button{width:42px;height:24px;border:1px solid #7f93ae;border-radius:2px;background:linear-gradient(#d0dbe8 48%,#c3d0e0 52%);box-shadow:inset 0 0 0 1px #e2eaf3}
  :host([active]) button{border-color:#5e7594;background:linear-gradient(#c6d7ea 48%,#9ab4d2 52%);box-shadow:inset 0 0 0 1px #d7e4f2}
  :host([active]) .x{border-color:#4a1010;background:linear-gradient(#e29a8e 45%,#b8402c 50%,#c4614f);box-shadow:inset 0 0 0 1px #e6b3aa}
  .v{flex:1;min-height:0;display:grid;background:#fbfdfc;overflow:hidden}</style>
  <header>${ic('part',20)}<span>${e.getAttribute('label')}</span><div class="c"><button aria-label="最小化">${ic('mmin',20,16)}</button><button aria-label="最大化">${ic('mmax',20,16)}</button><button class="x" aria-label="关闭">${ic('mx',20,16)}</button></div></header>
  <div class="v"><slot></slot></div>`);

define('sketch-view', () => `<style>:host{display:block;min-width:0;min-height:0}svg{display:block;width:100%;height:100%}</style>
<svg viewBox="15 281 943 672" preserveAspectRatio="xMinYMin slice" font-family="Liberation Sans">
 <path d="M424 502L733 499A124 124 0 0 1 618 669L327 671A112 112 0 0 1 424 502z" fill="#e4fafc"/>
 <path d="M549 502v167" stroke="#d5edf0"/>
 <g stroke="#6f6f6f" fill="none" shape-rendering="crispEdges"><path d="M469.500 281L472.500 953M547.500 281L548.500 500M549.500 670L550.500 953M15 599.500L958 591.500M15 913.500L958 905.500"/></g>
 <path d="M424 502L733 499A124 124 0 0 1 618 669L327 671A112 112 0 0 1 424 502z" fill="none" stroke="#00f" stroke-width="1.700"/>
 <g fill="none" stroke="#f0104f"><path stroke-width="1.200" d="M419 497h10v10h-10zM613 664h10v10h-10zM728 493h10v10h-10zM322 666h10v10h-10z"/><circle cx="424.500" cy="502" r="8.500"/><circle cx="618.500" cy="669" r="8.500"/><path stroke-width="2" d="M579 493v14M572 500h14M473 663v14M466 670h14"/></g>
 <path d="M423 501h3v3h-3zM617 668h3v3h-3zM732 498h3v3h-3zM326 670h3v3h-3z" fill="#d5103f"/>
 <path d="M508 712h4v35h-4z" fill="#22229e"/><path d="M510.500 693l4.500 20h-9z" fill="#4a4af5" stroke="#22229e" stroke-width=".7"/>
 <path d="M517 750h34v4h-34z" fill="#e00d0d"/><path d="M550 747l20 5-20 5z" fill="#c80000"/>
 <path d="M513 767v-9M508 757l5 5 5-5" fill="none" stroke="#00f020" stroke-width="2.500"/>
 <circle cx="511" cy="752" r="6.500" fill="#e7df12"/><circle cx="509.500" cy="750" r="2.500" fill="#fffb8c"/><path d="M510 753v-2h2" stroke="#900" fill="none"/>
 <text x="509" y="685" text-anchor="middle" font-size="15" fill="#1010f0">Z</text><text x="581" y="757" text-anchor="middle" font-size="15" fill="#f01010">X</text>
 <path d="M842 835l69-1 1 68-70 1z" fill="#fdfefe" stroke="#aaa"/><path d="M842 903l70-1-3 3-64 0z" fill="#ddd" stroke="#bbb" stroke-width=".6"/>
 <text x="876" y="873" text-anchor="middle" font-family="Liberation Serif" font-size="14" fill="#555">FRONT</text>
 <path d="M878 873v-22" stroke="#9a9af5" stroke-width="2"/><path d="M878 842l2 9h-4z" fill="#8a8af0"/><path d="M878 873h24" stroke="#ff9c9c" stroke-width="2"/><path d="M909 873l-8-2v4z" fill="#f77"/>
 <circle cx="878" cy="873" r="3" fill="#dede18"/><circle cx="878" cy="876" r="1.500" fill="#3d3"/>
</svg>`);

define('model-view', () => `<style>:host{display:block;grid-area:1/1;min-width:0;min-height:0}svg{display:block;width:100%;height:100%}</style>
<svg viewBox="970 281 903 672" preserveAspectRatio="xMinYMin slice">
 <defs><linearGradient id="a" x1="0" y1="0" x2="1" y2=".5"><stop offset=".1" stop-color="#8e969b"/><stop offset=".35" stop-color="#a9b2b8"/><stop offset=".8" stop-color="#a0a8ad"/></linearGradient>
 <linearGradient id="b" x1="0" y1="0" x2="1" y2=".5"><stop offset=".2" stop-color="#747885"/><stop offset="1" stop-color="#9398aa"/></linearGradient></defs>
 <g stroke="#46494c" stroke-width="1.200" stroke-linejoin="round">
 <path d="M1437.500 493.500Q1419 491 1400 496.500 1374 507 1359 526L1316 600Q1345 564 1398 567z" fill="url(#a)"/>
 <path d="M1681 526Q1687 545 1686.500 558C1686 575 1683 587 1676 598L1636 667Q1652 635 1640 599z" fill="url(#b)"/>
 <path d="M1437.500 493.500L1681 526 1640 599.500 1398 567z" fill="#9da3a8"/>
 <path d="M1316 681Q1304 660 1304.500 640 1305 620 1319 596C1335 576 1364 562 1398 567L1640 599.500Q1646 617 1645.500 635C1644 677 1604 721 1543 712z" fill="#b0b6c4"/></g>
 <g stroke="#0068dc" stroke-width="1.300"><path d="M1437.500 493.500L1641 520.500M1398 567L1599 594M1632 520L1620 542M1603 571L1591 592" fill="none"/><path d="M1632.500 519l-.5 9-7-3zM1591 593.500l0-9 8 3z" fill="#0068dc" stroke-width=".5"/></g>
 <text transform="translate(1617 560) rotate(-68)" text-anchor="middle" font-family="Liberation Sans Narrow,Liberation Sans" font-size="18" fill="#0068dc">11,6</text>
 <g fill="#fdfefe" stroke="#b0b0b0"><path d="M1773 831l58 6-10 23-67-8z"/><path d="M1754 852l67 8-5 60-62-10z"/><path d="M1831 837l-10 23-5 60 9-30z" fill="#eee"/></g>
 <text transform="translate(1784 890) rotate(6)" text-anchor="middle" font-family="Liberation Serif" font-size="14" fill="#555">TOP</text>
 <text transform="translate(1795 841) rotate(186)" text-anchor="middle" font-family="Liberation Serif" font-size="11" fill="#777">BACK</text>
 <path d="M1793 873v-20" stroke="#90ee90" stroke-width="2"/><path d="M1794 846l2 8h-4z" fill="#8e8"/><path d="M1793 873l22 3" stroke="#ff9c9c" stroke-width="2"/><path d="M1823 877l-8-3v5z" fill="#f88"/><path d="M1793 873l-6 12" stroke="#9a9af5" stroke-width="2"/><circle cx="1793" cy="873" r="3" fill="#dede18"/>
</svg>`);

define('tree-row', e => {
  const a = n => e.getAttribute(n), x = a('exp'), c = a('check');
  return `<style>:host{display:flex;align-items:flex-start;height:20px;padding-left:20px;font-family:Lato,"Noto Sans CJK SC",sans-serif;font-size:16px;line-height:16px}:host([level="1"]){padding-left:49px}:host([level="2"]){padding-left:72px}:host([root]){padding-left:6px}
  :host([bold]){font-weight:700}:host([dim]) .l{color:#858585}:host([root]) .k,:host([root]) .e{display:none}
  .e{width:20px;padding-top:4px}.e button{width:11px;height:11px;border:1px solid #8e9bab}.e .p{background:linear-gradient(#000,#000) center/5px 1px no-repeat,linear-gradient(#000,#000) center/1px 5px no-repeat,#f3f3f3}.e .m{background:linear-gradient(#000,#000) center/5px 1px no-repeat,#f3f3f3}
  .k{width:23px;padding-top:1px;display:flex}input{appearance:none;width:16px;height:14px;border:2px solid #4a6590;background:#fff}input:checked{background:#fff url("data:image/svg+xml,%3Csvg xmlns='http://www.w3.org/2000/svg' viewBox='0 0 12 10'%3E%3Cpath d='M2 4l3 4 5-7' fill='none' stroke='%23123a78' stroke-width='2.4'/%3E%3C/svg%3E") center/12px 10px no-repeat}
  .l{display:flex;align-items:center;gap:5px;height:18px;border:1px solid #a2b4c2;padding:0 7px 0 1px;background:linear-gradient(90deg,#fff,#eef3f5);white-space:pre}
  :host([quick]) .k{display:none}:host([quick]) .l{width:229px;gap:2px;border-color:#f0a030;background:linear-gradient(#f5a52c,#ffe05c);padding:0 12px 0 6px}.f{margin-left:auto}</style>
  <span class="e">${x ? `<button class="${x}" aria-label="展开"></button>` : ''}</span><span class="k">${c ? `<input type="checkbox" id="c" ${c === 'on' ? 'checked' : ''}>` : ''}</span>
  <label class="l" ${c ? 'for="c"' : ''}>${a('icon').split(' ').map(n => ic(n, 18, 16)).join('')}<slot></slot>${e.hasAttribute('quick') ? `<span class="f">${ic('tflag',22,14)}</span>` : ''}</label>`;
});

define('path-finder', () => `<style>:host{display:block;grid-area:1/1;z-index:1;justify-self:start;align-self:start;width:313px}
  .h{height:11px;margin-bottom:5px;border:1px solid #8c8c8c;background:repeating-linear-gradient(90deg,#4b5f90 0 2px,transparent 2px 4px) center/38px 2px no-repeat,linear-gradient(#e8e8e8,#bdbdbd)}</style><div class="h"></div>
  <tree-row root icon="tpart lock">零件2</tree-row>
  <tree-row exp="p" check="on" icon="tpmi">PMI</tree-row><tree-row check="on" icon="tbase">Base</tree-row><tree-row icon="tmat">材料 (无)</tree-row>
  <tree-row exp="m" check="off" icon="tplane" dim>基本参考平面</tree-row>
  <tree-row level="1" check="off" icon="tplane" dim>俯视图(XY)</tree-row><tree-row level="1" check="off" icon="tplane" dim>右视图(YZ)</tree-row><tree-row level="1" check="off" icon="tplane" dim>前视图(XZ)</tree-row>
  <tree-row exp="m" check="on" icon="tbody">设计体</tree-row><tree-row level="1" check="on" icon="tbody2">设计体_2</tree-row>
  <tree-row exp="m" quick bold icon="tquick">快速建模</tree-row><tree-row level="1" exp="m" bold icon="tfeat">特征</tree-row><tree-row level="2" bold icon="textr">拉伸 1</tree-row><tree-row level="1" exp="p" bold icon="tsketch">使用的草图</tree-row>`);

define('prompt-bar', () => `<style>:host{display:flex;height:28px;background:#7a7a7a;border-bottom:1px solid #333}
  .n{width:89px;display:flex;align-items:center;gap:6px;padding-left:6px;color:#fff;font-weight:700}
  .t{flex:1;background:#fff;border-top:1px solid #999;padding-left:1px;font:17px/29px "Noto Sans","Noto Sans CJK SC",sans-serif;white-space:nowrap;overflow:hidden}
  .s{width:21px;background:#f0f0f0;display:flex;flex-direction:column;justify-content:space-around;align-items:center}
  .c{display:flex;align-items:center;gap:6px;padding:0 3px 0 9px;color:#fff}.c button{width:14px}.c .a{width:16px;font-family:"Liberation Serif";font-weight:700;font-size:20px}.c .b{font-size:15px}
  .a::after{content:"";align-self:flex-start;border:2px solid transparent;border-bottom-color:#fff;border-top:0}.b::after{border-top:2px solid #fff;border-bottom:0}</style>
  <div class="n">${ic('pbar',25,12)}<span>提示条</span></div><div class="t">选择几何元素，单击“区域”以进行拉伸或旋转，或单击“实体”命令以创建 3D 特征。</div>
  <div class="s"><button aria-label="上">${ic('up1',10,8)}</button><button aria-label="下">${ic('dn1',10,8)}</button></div>
  <div class="c"><button class="a">A</button><button class="a b">A</button>${['chev2','drop','ppin','x'].map(n => `<button aria-label="${n}">${ic(n, 14)}</button>`).join('')}</div>`);

define('side-bar', () => `<style>:host{display:flex;flex-direction:column;width:32px;padding-top:9px;background:#737373}
  .i{height:41px;padding:1px 0 0 6px;justify-content:flex-start;align-items:flex-start}
  .t{margin:-4px 0 0 3px;height:145px;background:linear-gradient(90deg,#d0d0d0,#b8b8b8);border:1px solid #4c4c4c;border-right:0;border-radius:4px 0 0 4px;flex-direction:column;justify-content:flex-start;padding-top:5px;gap:4px}
  .t span{writing-mode:vertical-rl;line-height:20px}</style>` +
  [1,2,3,4,5,6,7,8].map(n => `<button class="i" aria-label="面板${n}">${ic('s' + n, 24, 22)}</button>`).join('') + `<button class="t">${ic('s9',26,22)}<span>特征库</span></button>`);

define('status-bar', () => `<style>:host{display:grid;grid-template-columns:847px 1fr auto;align-items:stretch;height:28px;background:linear-gradient(#4a4a4a,#2d2d2d);border-top:1px solid #555;color:#e6e6e6}
  .l{border-right:2px solid #ddd;margin:1px 0 3px}.m{display:flex;align-items:center;justify-content:center;border-right:2px solid #ddd;margin:1px 24px 3px 0}
  .r{display:flex;align-items:center;padding-bottom:3px}input.q{width:178px;height:24px;border:0;border-left:2px solid #aaa;background:#fff;padding:0 2px;color:#222;outline:0;border-radius:0}input.q::placeholder{color:#bdbdbd;opacity:1}
  .g{display:flex;justify-content:space-between;width:248px;margin:0 4px 0 3px}.z{display:flex;align-items:center;gap:3px;border-left:2px solid #ddd;height:24px}
  input.s{appearance:none;width:142px;height:20px;background:linear-gradient(#fff,#fff) center/100% 1px no-repeat}input.s::-webkit-slider-thumb{appearance:none;width:12px;height:18px;background:linear-gradient(90deg,#7799bd,#dbe9f7,#7799bd);border:1px solid #dce8f5;border-radius:2px 2px 6px 6px}
  .e{width:31px;border-left:2px solid #ddd;height:24px}</style>
  <div class="l"></div><div class="m">选择了 0 项</div><div class="r"><input class="q" aria-label="查找命令" placeholder="查找命令"><div class="g">${['go','zarea','zoom','fit','pan','rot','vo','st','sw'].map(n => `<button aria-label="${n}">${ic(n,20)}</button>`).join('')}</div>
  <div class="z"><button aria-label="缩小">${ic('minus',20)}</button><input class="s" type="range" aria-label="缩放" value="58"><button aria-label="放大">${ic('plus',20)}</button></div>
  ${['tube','rec','up'].map(n => `<button class="e" aria-label="${n}">${ic(n,20)}</button>`).join('')}</div>`);

define('cad-app', () => `<style>:host{display:flex;flex-direction:column;height:100vh}.mid{flex:1;min-height:0;display:flex;background:#737373}
  main{flex:1;min-width:0;display:flex;flex-direction:column}.ws{flex:1;min-height:0;display:grid;grid-template-columns:955fr 921fr;background:linear-gradient(#c8c8c8,#a0a0a0);border:1px solid #3f3f3f;padding:4px 5px 3px 5px;margin-right:-1px}
  .gap{height:9px;background:linear-gradient(#777 4px,#555 4px)}.foot{height:2px;background:#555}
  .task{display:grid;grid-template-columns:60px 430px 1fr;height:2px;margin-top:-2px;background:#333}.task i{grid-column:2;background:#ddd}</style>
  <app-header></app-header><app-ribbon></app-ribbon><command-strip></command-strip>
  <div class="mid"><main><doc-tabs></doc-tabs><div class="ws"><doc-window label="零件1"><sketch-view></sketch-view></doc-window><doc-window label="零件2" active><model-view></model-view><path-finder></path-finder></doc-window></div><div class="gap"></div><prompt-bar></prompt-bar><div class="foot"></div></main><side-bar></side-bar></div>
  <status-bar></status-bar><div class="task"><i></i></div>`);
</script>
</body>
</html>
